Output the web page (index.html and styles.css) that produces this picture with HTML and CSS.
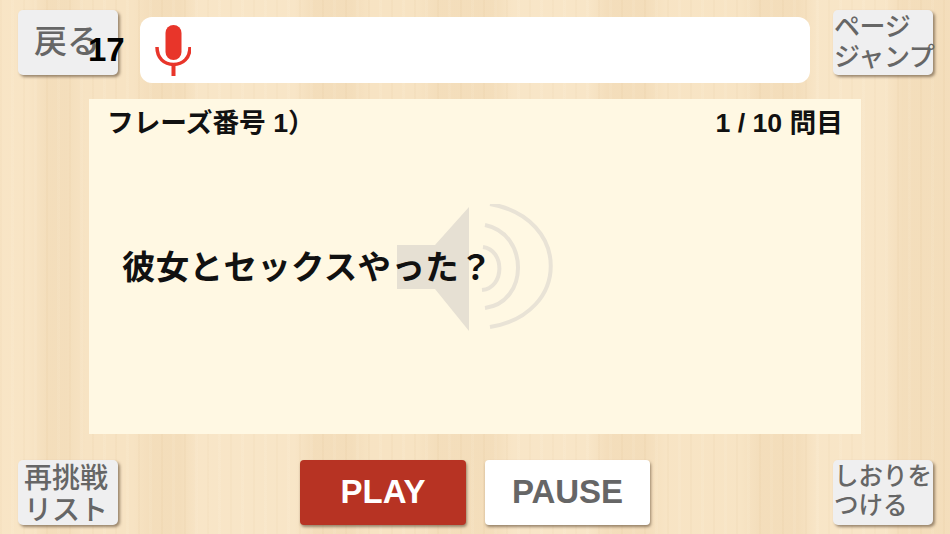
FILE: index.html
```html
<!DOCTYPE html>
<html lang="ja">
<head>
<meta charset="utf-8">
<title>フレーズ</title>
<link rel="stylesheet" href="styles.css">
</head>
<body>
<div class="screen">
  <header class="top-row">
    <button class="tool tool-back">戻る<span class="counter">17</span></button>
    <div class="search">
      <svg class="mic" width="36" height="52" viewBox="0 0 36 52" aria-hidden="true">
        <rect x="10.500" y="0" width="16" height="35" rx="8" fill="#e8352a"/>
        <path d="M2 22 C2 33 9 39.500 18.500 39.500 C28 39.500 35 33 35 22" fill="none" stroke="#e8352a" stroke-width="3.500"/>
        <rect x="16.500" y="39" width="4" height="12" fill="#e8352a"/>
      </svg>
    </div>
    <button class="tool tool-page">ページ<br>ジャンプ</button>
  </header>
  <main class="card">
    <div class="card-head">
      <span>フレーズ番号 1）</span>
      <span>1 / 10 問目</span>
    </div>
    <svg class="speaker" width="160" height="130" viewBox="0 0 160 130" aria-hidden="true">
      <path d="M0 41 H38 L72 3 V127 L38 85 H0 Z" fill="#e6e0d3"/>
      <g fill="none" stroke="#e9e3d6" stroke-width="4">
        <path d="M86 43 C108 46 108 84 85 86"/>
        <path d="M88 21 C132 30 132 98 88 104"/>
        <path d="M93 0 C174 14 174 110 93 123"/>
      </g>
    </svg>
    <p class="phrase">彼女とセックスやった？</p>
  </main>
  <footer class="bottom-row">
    <button class="tool tool-retry">再挑戦<br>リスト</button>
    <div class="transport">
      <button class="transport-btn play">PLAY</button>
      <button class="transport-btn pause">PAUSE</button>
    </div>
    <button class="tool tool-mark">しおりを<br>つける</button>
  </footer>
</div>
</body>
</html>
```
FILE: styles.css
```css
* { box-sizing: border-box; }
html, body { margin: 0; padding: 0; }
body {
  width: 950px;
  height: 534px;
  overflow: hidden;
  font-family: "Liberation Sans", "Noto Sans CJK JP", sans-serif;
}
.screen {
  width: 950px;
  height: 534px;
  display: flex;
  flex-direction: column;
  padding: 10px 17px 9px 18px;
  background-color: #f5e0be;
  background-image:
    linear-gradient(90deg,
      rgba(255,240,215,.3) 0 3%, rgba(238,212,175,.18) 5% 7%, rgba(255,240,215,.2) 9% 14%,
      rgba(238,212,175,.2) 16% 19%, rgba(255,242,220,.3) 21% 31%, rgba(238,212,175,.2) 33% 37%,
      rgba(255,240,215,.2) 39% 44%, rgba(238,212,175,.18) 46% 52%, rgba(255,242,220,.3) 54% 62%,
      rgba(238,212,175,.2) 64% 68%, rgba(255,240,215,.25) 70% 78%, rgba(238,212,175,.2) 80% 84%,
      rgba(255,242,220,.3) 86% 93%, rgba(238,212,175,.18) 95% 100%),
    repeating-linear-gradient(90deg, rgba(215,180,130,.1) 0 2px, transparent 2px 11px, rgba(255,250,235,.1) 11px 14px, transparent 14px 23px);
}
.top-row, .bottom-row {
  display: flex;
  justify-content: space-between;
}
.top-row { height: 65px; }
.tool {
  width: 100px;
  height: 65px;
  padding: 0;
  border: 0;
  border-radius: 5px;
  background: #efeff0;
  box-shadow: 2px 2px 3px rgba(90,70,50,.6);
  color: #666;
  font-family: "Noto Sans CJK JP", sans-serif;
  font-weight: 500;
  text-align: left;
  white-space: nowrap;
}
.tool-back {
  position: relative;
  padding: 0 0 7px 16px;
  font-size: 33px;
  line-height: 48px;
}
.counter {
  position: absolute;
  left: 70px;
  top: 22px;
  color: #000;
  font-family: "Liberation Sans", sans-serif;
  font-weight: 700;
  font-size: 33px;
  line-height: 36px;
}
.tool-page {
  font-size: 26px;
  line-height: 30px;
  letter-spacing: -.4px;
  padding: 0 0 6px 1px;
}
.tool-retry {
  font-size: 28px;
  line-height: 32px;
  text-align: center;
  padding: 0 4px 7px 0;
}
.tool-mark {
  font-size: 24.500px;
  line-height: 29px;
  padding: 0 0 7px 1px;
}
.search {
  width: 670px;
  height: 66px;
  margin-top: 7px;
  margin-right: 1px;
  background: #fff;
  border-radius: 12px;
  display: flex;
  align-items: flex-start;
  padding: 8px 0 0 15px;
}
.card {
  position: relative;
  width: 772px;
  height: 335px;
  margin: 24px 0 26px 71px;
  padding: 6px 18px 0;
  background: #fff8e3;
}
.card-head {
  display: flex;
  justify-content: space-between;
  color: #111;
  font-weight: 700;
  font-size: 26.700px;
  line-height: 36px;
}
.speaker {
  position: absolute;
  left: 308px;
  top: 105px;
}
.phrase {
  position: relative;
  margin: 100px 0 0 15px;
  color: #111;
  font-family: "Noto Sans CJK JP", sans-serif;
  font-weight: 700;
  font-size: 33.500px;
  letter-spacing: .3px;
  line-height: 48px;
}
.transport {
  display: flex;
  gap: 19px;
  margin-right: 1px;
}
.transport-btn {
  width: 165px;
  height: 65px;
  padding: 0 0 1px;
  border: 0;
  border-radius: 4px;
  box-shadow: 1px 2px 3px rgba(90,70,50,.6);
  font-family: "Liberation Sans", sans-serif;
  font-weight: 700;
  font-size: 33px;
}
.play { background: #b73323; color: #fff; width: 166px; }
.pause { background: #fff; color: #666; }
```
